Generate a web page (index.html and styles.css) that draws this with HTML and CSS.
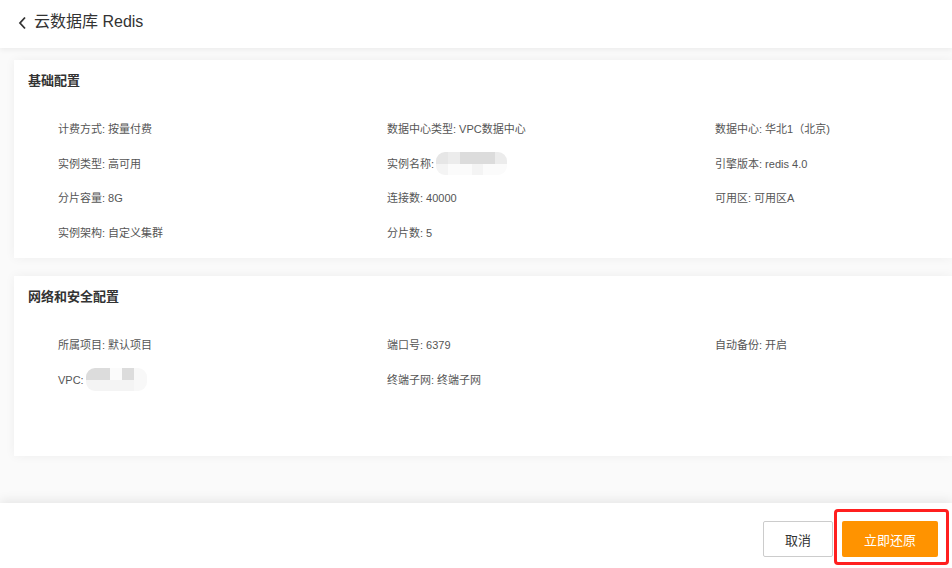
FILE: index.html
```html
<!DOCTYPE html>
<html lang="zh-CN">
<head>
<meta charset="utf-8">
<title>云数据库 Redis</title>
<link rel="stylesheet" href="styles.css">
</head>
<body>
<div class="page">
  <header class="topbar">
    <svg class="back" width="9" height="14" viewBox="0 0 9 14"><polyline points="7,1.5 2,7 7,12.5" fill="none" stroke="#333" stroke-width="1.8"/></svg>
    <span class="title">云数据库 Redis</span>
  </header>
  <main class="content">
    <section class="card card-basic">
      <h2 class="card-title">基础配置</h2>
      <div class="grid">
        <div class="item">计费方式: 按量付费</div>
        <div class="item">数据中心类型: VPC数据中心</div>
        <div class="item">数据中心: 华北1（北京)</div>
        <div class="item">实例类型: 高可用</div>
        <div class="item">实例名称: <span class="blur blur-name"><i class="c1"></i><i class="c2"></i><i class="c3"></i><i class="c3"></i><i class="c3"></i><i class="c2"></i><i class="c4"></i><i class="c5"></i><i class="c5"></i><i class="c4"></i><i class="c5"></i><i class="c5"></i></span></div>
        <div class="item">引擎版本: redis 4.0</div>
        <div class="item">分片容量: 8G</div>
        <div class="item">连接数: 40000</div>
        <div class="item">可用区: 可用区A</div>
        <div class="item">实例架构: 自定义集群</div>
        <div class="item">分片数: 5</div>
      </div>
    </section>
    <section class="card card-net">
      <h2 class="card-title">网络和安全配置</h2>
      <div class="grid">
        <div class="item">所属项目: 默认项目</div>
        <div class="item">端口号: 6379</div>
        <div class="item">自动备份: 开启</div>
        <div class="item">VPC: <span class="blur blur-vpc"><i class="c3"></i><i class="c3"></i><i class="c5"></i><i class="c3"></i><i class="c6"></i><i class="c4"></i><i class="c4"></i><i class="c4"></i><i class="c4"></i><i class="c6"></i></span></div>
        <div class="item">终端子网: 终端子网</div>
      </div>
    </section>
  </main>
  <footer class="footer">
    <button class="btn btn-cancel">取消</button>
    <div class="primary-wrap">
      <button class="btn btn-primary">立即还原</button>
      <span class="highlight"></span>
    </div>
  </footer>
</div>
</body>
</html>
```
FILE: styles.css
```css
* { box-sizing: border-box; }
html, body { margin: 0; padding: 0; }
body {
  background: #fafafa;
  font-family: "Liberation Sans", "Noto Sans CJK SC", sans-serif;
  color: #555;
  overflow: hidden;
}
.page {
  width: 952px;
  height: 568px;
  display: flex;
  flex-direction: column;
  overflow: hidden;
}
.topbar {
  height: 48px;
  flex: none;
  background: #fff;
  display: flex;
  align-items: center;
  padding-left: 18px;
  box-shadow: 0 2px 5px rgba(0,0,0,0.06);
  position: relative;
  z-index: 2;
}
.back { margin-right: 7px; margin-top: -3px; }
.title {
  font-size: 16px;
  color: #333;
  line-height: 20px;
  margin-top: -4px;
}
.content {
  flex: 1;
  padding: 12px 0 0 14px;
}
.card {
  background: #fff;
  box-shadow: 0 0 10px rgba(0,0,0,0.05);
  padding: 14px 0 0 14px;
}
.card-basic { height: 198px; margin-bottom: 18px; }
.card-net { height: 180px; }
.card-title {
  margin: 0;
  font-size: 13px;
  font-weight: bold;
  color: #333;
  line-height: 14px;
}
.grid {
  margin-top: 24px;
  padding-left: 30px;
  display: grid;
  grid-template-columns: 329px 328px 1fr;
  grid-auto-rows: 34.5px;
}
.item {
  font-size: 11px;
  line-height: 34.5px;
  color: #555;
  white-space: nowrap;
  display: flex;
  align-items: center;
}
.blur {
  display: inline-grid;
  grid-template-rows: 12px 11px;
  height: 23px;
  border-radius: 9px;
  overflow: hidden;
  margin-left: 2px;
  filter: blur(0.6px);
}
.blur-name { width: 71px; grid-template-columns: repeat(6, 1fr); }
.blur-vpc { width: 61px; grid-template-columns: repeat(5, 1fr); }
.blur i { display: block; }
.c1 { background: #e6e6e6; }
.c2 { background: #ececec; }
.c3 { background: #dcdcdc; }
.c4 { background: #f4f4f4; }
.c5 { background: #fbfbfb; }
.c6 { background: #f8f8f8; }
.footer {
  height: 65px;
  flex: none;
  background: #fff;
  box-shadow: 0 -3px 10px rgba(0,0,0,0.08);
  display: flex;
  justify-content: flex-end;
  align-items: flex-start;
  padding: 18px 14px 0 0;
  gap: 9px;
  position: relative;
  z-index: 2;
}
.btn {
  height: 36px;
  font-family: "Liberation Sans", "Noto Sans CJK SC", sans-serif;
  font-size: 13px;
  border-radius: 2px;
  cursor: pointer;
  padding: 0;
}
.btn-cancel {
  width: 70px;
  background: #fff;
  border: 1px solid #ccc;
  color: #333;
}
.primary-wrap { position: relative; }
.btn-primary {
  width: 96px;
  background: #ff9300;
  border: none;
  color: #fff;
}
.highlight {
  position: absolute;
  left: -8px;
  top: -12px;
  right: -11px;
  bottom: -8px;
  border: 3px solid #ff1f1f;
  border-radius: 4px;
  pointer-events: none;
}
```
